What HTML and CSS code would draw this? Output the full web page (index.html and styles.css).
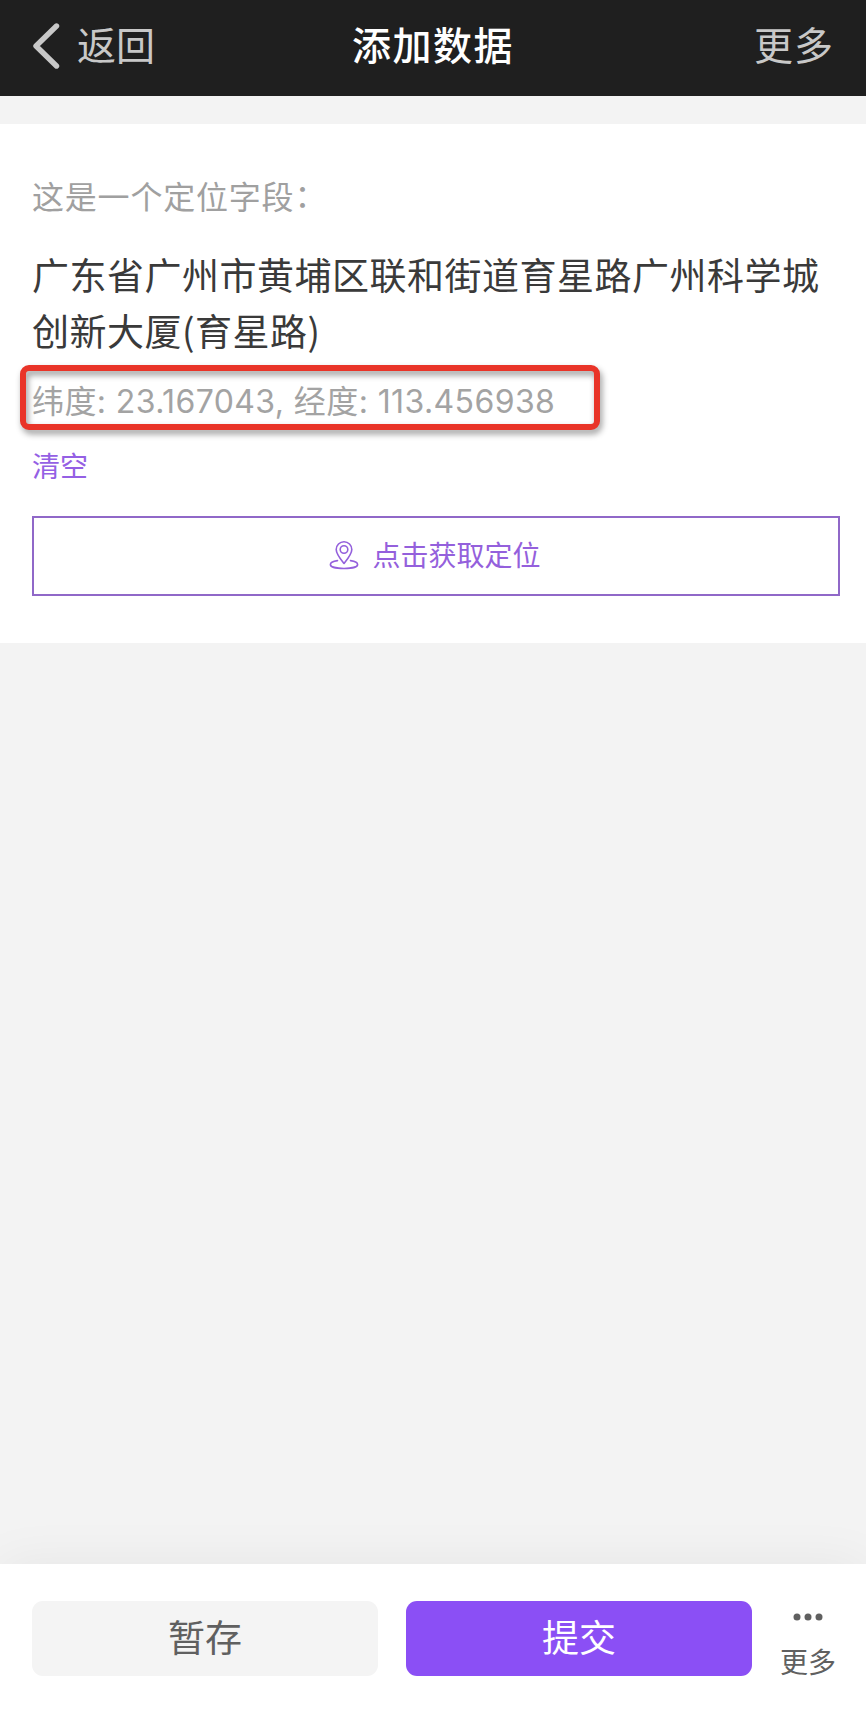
FILE: index.html
```
<!DOCTYPE html>
<html lang="zh-CN">
<head>
  <meta charset="UTF-8" />
  <meta name="viewport" content="width=device-width, initial-scale=1.0"/>
  <title>添加数据</title>
  <link rel="stylesheet" href="styles.css">
</head>
<body>
  <header class="navbar">
    <a class="nav-back">
      <svg class="back-icon" width="28" height="48" viewBox="0 0 28 48" fill="none" stroke="currentColor" stroke-width="5.4" stroke-linecap="round" stroke-linejoin="round">
        <path d="M24.5 4 4 24 24.5 44"/>
      </svg>
      <span>返回</span>
    </a>
    <h1 class="nav-title">添加数据</h1>
    <a class="nav-more">更多</a>
  </header>

  <main class="content">
    <section class="card">
      <div class="field-label">这是一个定位字段<span class="colon">：</span></div>
      <div class="address">广东省广州市黄埔区联和街道育星路广州科学城创新大厦(育星路)</div>
      <div class="coords">
        纬度: 23.167043, 经度: 113.456938
        <div class="highlight"></div>
      </div>
      <a class="clear">清空</a>
      <button class="locate">
        <svg width="30" height="30" viewBox="0 0 30 30" fill="none" stroke="currentColor" stroke-width="1.6" stroke-linecap="round" stroke-linejoin="round">
          <path d="M15 23.5C11 18.5 7.2 14 7.2 9.5a7.8 7.8 0 0 1 15.6 0C22.8 14 19 18.5 15 23.5Z"/>
          <circle cx="15" cy="9.5" r="3.8"/>
          <path d="M8.5 20.6C4 21.2 1.4 22.6 1.4 24.4c0 2.5 6 4.1 13.6 4.1s13.6-1.6 13.6-4.1c0-1.8-2.6-3.2-7.1-3.8"/>
        </svg>
        <span>点击获取定位</span>
      </button>
    </section>
  </main>

  <footer class="toolbar">
    <button class="btn">暂存</button>
    <button class="btn btn-primary">提交</button>
    <a class="more">
      <svg width="30" height="8" viewBox="0 0 30 8" fill="currentColor">
        <circle cx="4" cy="4" r="3.5"/>
        <circle cx="15" cy="4" r="3.5"/>
        <circle cx="26" cy="4" r="3.5"/>
      </svg>
      <span>更多</span>
    </a>
  </footer>
</body>
</html>
```

FILE: styles.css
```
* {
  box-sizing: border-box;
}

body {
  margin: 0;
  height: 1718px;
  display: flex;
  flex-direction: column;
  font-family: "Noto Sans CJK SC", sans-serif;
  font-weight: 400;
  background-color: #f3f3f3;
  overflow: hidden;
}

button {
  font-family: inherit;
  font-weight: inherit;
  margin: 0;
  padding: 0;
}

.navbar {
  height: 96px;
  padding: 0 32px 11px;
  display: grid;
  grid-template-columns: 1fr auto 1fr;
  align-items: center;
  background-color: #1f1f1f;
  color: #c8c8c8;
  font-size: 39px;
  line-height: 56px;
}

.nav-back {
  display: flex;
  align-items: center;
  gap: 17px;
}

.back-icon {
  margin-top: 6px;
}

.nav-title {
  margin: 0;
  font-size: 39px;
  font-weight: 500;
  letter-spacing: 1.5px;
  color: #fff;
}

.nav-more {
  justify-self: end;
  letter-spacing: 1px;
}

.content {
  flex: 1;
  padding-top: 28px;
}

.card {
  height: 519px;
  padding: 51px 25px 0 32px;
  background-color: #fff;
}

.field-label {
  height: 40px;
  font-size: 32px;
  line-height: 40px;
  letter-spacing: 0.8px;
  color: #a0a0a0;
}

.colon {
  line-height: 0;
  vertical-align: 2px;
}

.address {
  margin-top: 31px;
  font-size: 37px;
  line-height: 56px;
  letter-spacing: 0.5px;
  color: #3a3a3a;
}

.coords {
  position: relative;
  margin-top: 22px;
  font-family: Inter, "Noto Sans CJK SC", sans-serif;
  font-size: 32px;
  line-height: 44px;
  letter-spacing: 0.4px;
  color: #a3a3a3;
}

/* red frame round the coordinates */
.highlight {
  position: absolute;
  top: -15px;
  left: -12px;
  width: 580px;
  height: 65px;
  border: 6px solid #e93428;
  border-radius: 9px;
  filter: drop-shadow(2px 4px 3px rgba(0, 0, 0, 0.4));
}

.clear {
  display: block;
  margin-top: 23px;
  font-size: 28px;
  line-height: 36px;
  color: #9460e4;
}

.locate {
  width: 808px;
  height: 80px;
  margin-top: 33px;
  padding: 0 2px 2px 0;
  display: flex;
  align-items: center;
  justify-content: center;
  gap: 13px;
  border: 2px solid #9068c8;
  background-color: #fff;
  color: #9460dc;
  font-size: 28px;
  line-height: 36px;
}

.locate span {
  margin-top: -2px;
}

.toolbar {
  height: 154px;
  padding: 37px 30px 0 32px;
  display: flex;
  background-color: #fff;
  box-shadow: 0 0 50px rgba(0, 0, 0, 0.06);
}

.btn {
  width: 346px;
  height: 75px;
  margin-right: 28px;
  padding-bottom: 6px;
  border: none;
  border-radius: 11px;
  background-color: #f4f4f4;
  color: #606060;
  font-size: 37px;
}

.btn-primary {
  background-color: #8b4ff5;
  color: #fff;
}

.more {
  flex: 1;
  display: flex;
  flex-direction: column;
  align-items: center;
  padding-top: 12px;
  font-size: 28px;
  line-height: 36px;
  white-space: nowrap;
  color: #606060;
}

.more span {
  margin-top: 22px;
}
```
